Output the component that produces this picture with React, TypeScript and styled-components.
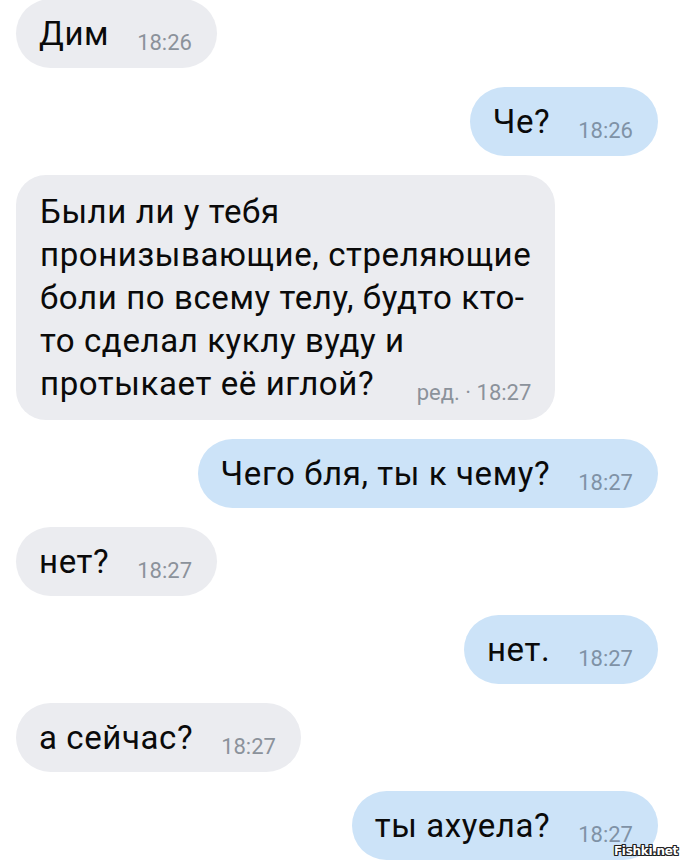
import React, {FC} from 'react';
import styled, {createGlobalStyle} from 'styled-components';

interface Message {
  text: string[];
  time: string;
  out: boolean;
  edited?: boolean;
}

const messages: Message[] = [
  {text: ['Дим'], time: '18:26', out: false},
  {text: ['Че?'], time: '18:26', out: true},
  {
    text: [
      'Были ли у тебя',
      'пронизывающие, стреляющие',
      'боли по всему телу, будто кто-',
      'то сделал куклу вуду и',
      'протыкает её иглой?',
    ],
    time: '18:27',
    out: false,
    edited: true,
  },
  {text: ['Чего бля, ты к чему?'], time: '18:27', out: true},
  {text: ['нет?'], time: '18:27', out: false},
  {text: ['нет.'], time: '18:27', out: true},
  {text: ['а сейчас?'], time: '18:27', out: false},
  {text: ['ты ахуела?'], time: '18:27', out: true},
];

const GlobalStyle = createGlobalStyle`
  html, body {
    margin: 0;
    padding: 0;
    background: #ffffff;
    overflow: hidden;
  }
  body {
    font-family: Roboto, "Liberation Sans", sans-serif;
  }
`;

const App: FC = () => (
  <>
    <GlobalStyle />
    <Screen>
      <Feed>
        {messages.map((m, i) => (
          <Row key={i} out={m.out}>
            <Bubble out={m.out} multi={m.text.length > 1}>
              {m.text.map((line, j) => (
                <React.Fragment key={j}>
                  {j > 0 && <br />}
                  {line}
                </React.Fragment>
              ))}
              <Time out={m.out}>
                {m.edited ? `ред. · ${m.time}` : m.time}
              </Time>
            </Bubble>
          </Row>
        ))}
      </Feed>
      <Watermark>Fishki.net</Watermark>
    </Screen>
  </>
);

export default App;

const Screen = styled.div`
  position: relative;
  width: 682px;
  height: 862px;
  overflow: hidden;
`;

const Feed = styled.div`
  display: flex;
  flex-direction: column;
  gap: 19px;
  margin-top: -1px;
  padding: 0 24px 0 16px;
`;

const Row = styled.div<{out: boolean}>`
  display: flex;
  justify-content: ${p => (p.out ? 'flex-end' : 'flex-start')};
`;

const Bubble = styled.div<{out: boolean; multi: boolean}>`
  display: flow-root;
  box-sizing: border-box;
  padding: ${p => (p.multi ? '15px 24px 15px 24px' : '13px 25px 13px 23px')};
  border-radius: ${p => (p.multi ? '30px' : '35px')};
  background: ${p => (p.out ? '#cce3f8' : '#ebecf0')};
  color: #0a0a0a;
  font-size: 33px;
  line-height: 43px;
  letter-spacing: 0.6px;
`;

const Time = styled.span<{out: boolean}>`
  float: right;
  margin: 20px 0 0 28px;
  font-size: 22px;
  line-height: 22px;
  letter-spacing: 0;
  color: ${p => (p.out ? '#7f92a6' : '#8b929b')};
`;

const Watermark = styled.div`
  position: absolute;
  right: 4px;
  bottom: 4px;
  font-family: "DejaVu Sans", sans-serif;
  font-size: 12px;
  font-weight: bold;
  color: #ffffff;
  letter-spacing: -0.3px;
  text-shadow:
    1px 0 0 #222, -1px 0 0 #222, 0 1px 0 #222, 0 -1px 0 #222,
    1px 1px 0 #222, -1px -1px 0 #222, 1px -1px 0 #222, -1px 1px 0 #222;
`;
